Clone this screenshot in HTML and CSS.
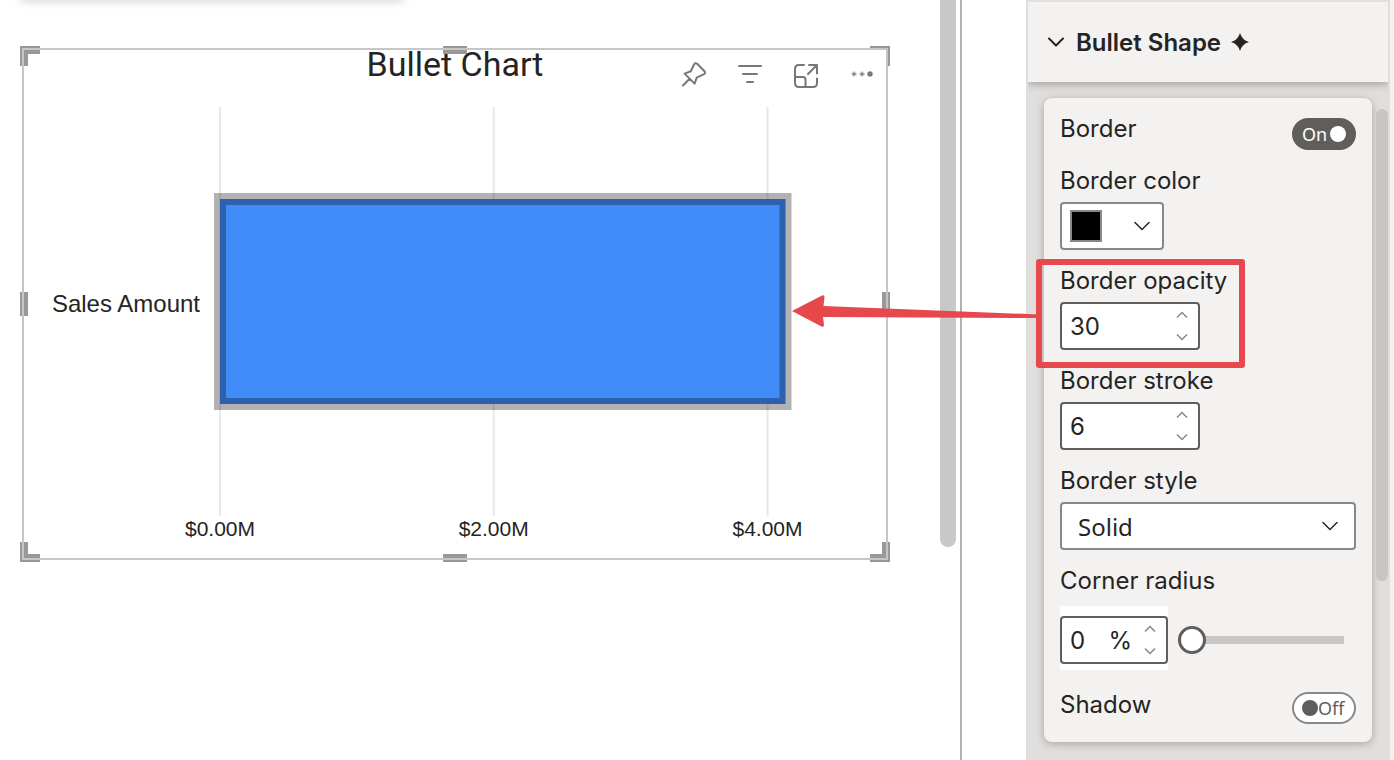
FILE: index.html
```html
<!DOCTYPE html>
<html lang="en">
<head>
<meta charset="utf-8">
<meta name="viewport" content="width=device-width, initial-scale=1">
<title>Bullet Chart</title>
<link rel="stylesheet" href="styles.css">
</head>
<body>
<div class="app">
  <main class="canvas">
    <div class="ribbon"></div>
    <section class="visual" aria-label="Bullet Chart">
      <header class="visual-head">
        <h1 class="visual-title">Bullet Chart</h1>
        <div class="visual-tools">
          <button class="tool" type="button" aria-label="Pin visual">
            <svg viewBox="0 0 24 24"><path d="M1 22.500 7.600 15.700M2.600 10.600 12.600 20.600 14.700 14.600 22 11.200Q24 10 22.500 8.200L15.200 .8Q13.500 -.6 12.300 1L8.800 8.300Z"/></svg>
          </button>
          <button class="tool" type="button" aria-label="Filters">
            <svg viewBox="0 0 24 24"><path d="M1 3H23M5 11H19M9 19H15"/></svg>
          </button>
          <button class="tool" type="button" aria-label="Focus mode">
            <svg viewBox="0 0 24 24"><path d="M10 2H5Q1 2 1 6V20Q1 24 5 24H19Q23 24 23 20V15.500M15 2H23V10.500M22.500 2.500 14 11M1 14H9Q11.500 14 11.500 16.500V24"/></svg>
          </button>
          <button class="tool" type="button" aria-label="More options">
            <svg viewBox="0 0 24 24"><g class="dots"><circle class="halo" cx="4" cy="11" r="2.200"/><circle cx="4" cy="11" r="1.500"/><circle class="halo" cx="12" cy="11" r="2.200"/><circle cx="12" cy="11" r="1.500"/><circle cx="20" cy="11" r="2.700"/></g></svg>
          </button>
        </div>
      </header>
      <svg class="plot" viewBox="24 100 862 458" role="img" aria-label="Sales Amount bar">
        <path class="grid" d="M220 107V516M493.700 107V516M767.500 107V516"/>
        <rect class="bar" x="220" y="199" width="565.500" height="205"/>
        <text class="category" x="200" y="312" text-anchor="end">Sales Amount</text>
        <g class="ticks" text-anchor="middle">
          <text x="220" y="536">$0.00M</text>
          <text x="493.700" y="536">$2.00M</text>
          <text x="767.500" y="536">$4.00M</text>
        </g>
      </svg>
      <span class="handle tl"></span><span class="handle tr"></span>
      <span class="handle bl"></span><span class="handle br"></span>
      <span class="handle top"></span><span class="handle bottom"></span>
      <span class="handle left"></span><span class="handle right"></span>
      <span class="frame"></span>
    </section>
    <div class="canvas-thumb"></div>
  </main>

  <aside class="panel">
    <button class="panel-head" type="button" aria-expanded="true">
      <svg class="chevron" viewBox="0 0 16 10"><path d="M1 1.500 8 8.500 15 1.500"/></svg>
      <span>Bullet Shape</span>
      <svg class="spark" viewBox="0 0 18 18"><path d="M9 0Q11 7 18 9Q11 11 9 18Q7 11 0 9Q7 7 9 0Z"/></svg>
    </button>
    <div class="panel-body">
      <form class="card">
        <div class="switch-row">
          <label for="border">Border</label>
          <span class="switch on"><input id="border" type="checkbox" role="switch" checked><span>On</span><i></i></span>
        </div>
        <div class="field">
          <label for="color">Border color</label>
          <button class="color" id="color" type="button"><span class="swatch"></span><svg class="chevron" viewBox="0 0 16 10"><path d="M1 1.500 8 8.500 15 1.500"/></svg></button>
        </div>
        <div class="field marked">
          <label for="opacity">Border opacity</label>
          <div class="number">
            <input id="opacity" type="text" inputmode="numeric" value="30">
            <span class="spin"><button type="button" aria-label="Increase"><svg viewBox="0 0 12 6"><path d="M1 5.500 6 .5 11 5.500"/></svg></button><button type="button" aria-label="Decrease"><svg viewBox="0 0 12 6"><path d="M1 .5 6 5.500 11 .5"/></svg></button></span>
          </div>
          <div class="callout">
            <svg class="arrow" viewBox="792 290 248 40"><path d="M792 311 822 295.500Q824.500 294.500 824.500 297L823.500 306 1040 314.500V318L823 317 824 325Q824 327.500 821.500 326.500Z"/></svg>
          </div>
        </div>
        <div class="field">
          <label for="stroke">Border stroke</label>
          <div class="number">
            <input id="stroke" type="text" inputmode="numeric" value="6">
            <span class="spin"><button type="button" aria-label="Increase"><svg viewBox="0 0 12 6"><path d="M1 5.500 6 .5 11 5.500"/></svg></button><button type="button" aria-label="Decrease"><svg viewBox="0 0 12 6"><path d="M1 .5 6 5.500 11 .5"/></svg></button></span>
          </div>
        </div>
        <div class="field">
          <label for="style">Border style</label>
          <div class="select">
            <select id="style"><option>Solid</option><option>Dashed</option><option>Dotted</option></select>
            <svg class="chevron" viewBox="0 0 16 10"><path d="M1 1.500 8 8.500 15 1.500"/></svg>
          </div>
        </div>
        <div class="field radius">
          <label for="radius">Corner radius</label>
          <div class="radius-row">
            <div class="number-wrap">
              <div class="number">
                <input id="radius" type="text" inputmode="numeric" value="0">
                <span class="unit">%</span>
                <span class="spin"><button type="button" aria-label="Increase"><svg viewBox="0 0 12 6"><path d="M1 5.500 6 .5 11 5.500"/></svg></button><button type="button" aria-label="Decrease"><svg viewBox="0 0 12 6"><path d="M1 .5 6 5.500 11 .5"/></svg></button></span>
              </div>
            </div>
            <input class="slider" type="range" min="0" max="100" value="0" aria-label="Corner radius">
          </div>
        </div>
        <div class="switch-row shadow-row">
          <label for="shadow">Shadow</label>
          <span class="switch off"><input id="shadow" type="checkbox" role="switch"><i></i><span>Off</span></span>
        </div>
      </form>
      <div class="panel-thumb"></div>
    </div>
  </aside>
</div>
</body>
</html>
```

FILE: styles.css
```css
* { box-sizing: border-box; }

body {
  margin: 0;
  background: #fff;
  color: #252423;
  font-family: Inter, "Liberation Sans", sans-serif;
  font-size: 24px;
}

button, input, select { font: inherit; color: inherit; }
button { padding: 0; border: 0; background: none; }
svg { display: block; overflow: visible; }

.app { display: flex; min-height: 100vh; }

/* Report canvas */
.canvas {
  position: relative;
  flex: 1;
  display: flex;
  align-items: flex-start;
  min-width: 0;
  padding: 0 4px 0 22px;
  border-right: 2px solid #b3b0ad;
}

.ribbon {
  position: absolute;
  top: -8px;
  left: 20px;
  width: 384px;
  height: 8px;
  border-radius: 4px;
  box-shadow: 0 1px 10px rgba(0, 0, 0, .2);
}

.visual {
  position: relative;
  flex: 1;
  min-width: 0;
  margin: 48px 52px 0 0;
  padding: 2px;
}

.visual-head {
  position: relative;
  height: 50px;
}

.visual-title {
  margin: 0;
  font-family: Roboto, sans-serif;
  font-size: 34px;
  font-weight: 400;
  line-height: 28px;
  text-align: center;
}

.visual-tools {
  position: absolute;
  top: 0;
  right: 12px;
  display: flex;
  align-items: center;
  gap: 32px;
  height: 50px;
}

.tool { width: 24px; height: 24px; }
.tool svg { fill: none; stroke: #777; stroke-width: 2; stroke-linecap: round; stroke-linejoin: round; }
.tool .dots { fill: #777; stroke: none; }
.dots .halo { fill: none; stroke: #c4c4c4; stroke-width: 1; }

.plot { width: 100%; font-family: "Liberation Sans", Arial, sans-serif; fill: #252423; }
.grid { stroke: #e8e8e8; stroke-width: 2; }
.bar { fill: #418bf9; stroke: #000; stroke-opacity: .3; stroke-width: 12; }
.category { font-size: 24px; }
.ticks { font-size: 21px; }

.frame { position: absolute; inset: 0; border: 2px solid #c6c6c6; pointer-events: none; }

.handle { position: absolute; width: 20px; height: 20px; border: 0 solid #999; }
.tl { top: -2px; left: -2px; border-width: 8px 0 0 8px; }
.tr { top: -2px; right: -2px; border-width: 2px 2px 0 0; }
.bl { bottom: -2px; left: -2px; border-width: 0 0 8px 8px; }
.br { bottom: -2px; right: -2px; border-width: 0 8px 8px 0; }
.top, .bottom { left: calc(50% - 12px); width: 24px; height: 8px; background: #999; }
.top { top: -2px; }
.bottom { bottom: -2px; }
.left, .right { top: calc(50% - 12px); width: 8px; height: 24px; background: #999; }
.left { left: -2px; }
.right { right: -2px; }

.canvas-thumb {
  width: 16px;
  height: 72vh;
  border-radius: 0 0 8px 8px;
  background: #c8c8c8;
}

/* Format panel */
.panel {
  display: flex;
  flex-direction: column;
  width: 368px;
  margin-left: 64px;
  padding: 2px 2px 0;
  border-right: 4px solid #f3f2f1;
  background: #e1dfdd;
}

.panel-head {
  display: flex;
  align-items: center;
  gap: 12px;
  height: 80px;
  padding: 0 20px;
  background: #f3f2f1;
  box-shadow: 0 2px 8px rgba(0, 0, 0, .3);
  clip-path: inset(0 0 -16px 0);
  font-weight: 600;
}

.chevron { width: 16px; height: 10px; fill: none; stroke: #252423; stroke-width: 2; stroke-linecap: round; stroke-linejoin: round; }
.color .chevron, .select .chevron { stroke-width: 1.5; }
.spark { width: 18px; height: 18px; margin-left: -2px; fill: #252423; }

.panel-body {
  display: flex;
  flex: 1;
  align-items: flex-start;
  gap: 4px;
  padding: 16px 0 16px 16px;
}

.panel-thumb {
  width: 12px;
  height: 472px;
  margin-top: 11px;
  border-radius: 6px;
  background: #c8c6c4;
}

.card {
  flex: 1;
  display: flex;
  flex-direction: column;
  gap: 16px;
  padding: 16px;
  border-radius: 8px;
  background: #f3f2f1;
  box-shadow: 0 2px 8px rgba(0, 0, 0, .26);
}

label { line-height: 30px; }

.field { position: relative; display: flex; flex-direction: column; align-items: flex-start; gap: 6px; }
.field.radius { gap: 10px; }

.switch-row { display: flex; justify-content: space-between; align-items: flex-start; height: 36px; }
.switch-row .switch { align-self: flex-end; }
.shadow-row { margin-top: 4px; }
.shadow-row .switch { align-self: center; }

.switch {
  position: relative;
  display: flex;
  align-items: center;
  width: 64px;
  height: 32px;
  padding: 0 8px;
  border: 2px solid #605e5c;
  border-radius: 16px;
  font-family: "Noto Sans", sans-serif;
  font-size: 18px;
  line-height: 28px;
}
.switch input { position: absolute; inset: 0; width: 100%; height: 100%; margin: 0; opacity: 0; }
.switch i { flex: none; width: 16px; height: 16px; border-radius: 50%; background: #605e5c; }
.switch.on { justify-content: space-between; background: #605e5c; color: #fff; }
.switch.on i { background: #fff; }
.switch.off { border-color: #8a8886; background: #fff; color: #605e5c; }

.color {
  display: flex;
  align-items: center;
  justify-content: space-between;
  width: 104px;
  height: 48px;
  padding: 0 12px 0 8px;
  border: 2px solid #8a8886;
  border-radius: 4px;
  background: #fff;
}
.swatch { width: 32px; height: 32px; border: 2px solid #8a8886; background: #000; }

.number {
  display: flex;
  align-items: center;
  width: 140px;
  height: 48px;
  padding: 0 10px 0 8px;
  border: 2px solid #605e5c;
  border-radius: 4px;
  background: #fff;
}
.number input { flex: 1; min-width: 0; padding: 0; border: 0; outline: 0; background: none; }
.spin { display: flex; flex-direction: column; gap: 16px; }
.spin button { width: 12px; height: 6px; }
.spin svg { fill: none; stroke: #8a8886; stroke-width: 1.5; }

.select { position: relative; width: 100%; }
.select select {
  display: block;
  width: 100%;
  height: 48px;
  padding: 0 40px 0 16px;
  border: 2px solid #8a8886;
  border-radius: 4px;
  appearance: none;
  background: #fff;
  font-family: "Noto Sans", sans-serif;
}
.select .chevron { position: absolute; top: 19px; right: 18px; pointer-events: none; }

.radius-row { display: flex; gap: 10px; width: 100%; padding-right: 12px; }
.number-wrap { padding: 10px 0 6px; background: #fff; }
.number-wrap .number { width: 108px; }
.unit { margin-right: 12px; }

.slider {
  flex: 1;
  min-width: 0;
  height: 48px;
  margin: 10px 0 6px;
  appearance: none;
  background: none;
}
.slider::-webkit-slider-runnable-track { height: 8px; border-radius: 4px 0 0 4px; background: #c8c6c4; }
.slider::-webkit-slider-thumb {
  width: 28px;
  height: 28px;
  margin-top: -10px;
  border: 3px solid #605e5c;
  border-radius: 50%;
  appearance: none;
  background: #fff;
}

/* Annotation over the opacity field */
.callout {
  position: absolute;
  top: -7px;
  left: -24px;
  width: 209px;
  height: 109px;
  border: 6px solid #e6484b;
  border-radius: 3px;
  pointer-events: none;
}
.arrow { position: absolute; top: 25px; left: -250px; width: 248px; height: 40px; fill: #e6484b; }
```
